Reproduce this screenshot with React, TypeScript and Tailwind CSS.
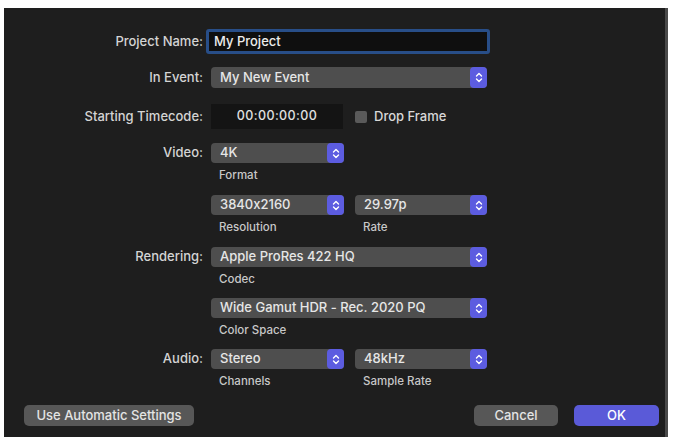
import React from 'react';

const font = { fontFamily: 'Inter, "Noto Sans", "Liberation Sans", sans-serif' };

function Stepper() {
  return (
    <div className="flex h-full w-[17px] items-center justify-center rounded-[4px] bg-[#5c5ce0]">
      <svg width="8" height="11" viewBox="0 0 8 11" fill="none" stroke="#ffffff" strokeWidth="1.4" strokeLinecap="round" strokeLinejoin="round">
        <path d="M1.5 4 L4 1.5 L6.5 4" />
        <path d="M1.5 7 L4 9.5 L6.5 7" />
      </svg>
    </div>
  );
}

function Popup({ value, width }: { value: string; width: string }) {
  return (
    <div className={`flex h-[20px] items-center justify-between rounded-[4px] bg-[#4e4e4e] pl-[9px] ${width}`}>
      <span className="text-[13px] font-medium text-[#e6e6e6]">{value}</span>
      <Stepper />
    </div>
  );
}

function Label({ children }: { children: React.ReactNode }) {
  return <div className="w-[199px] shrink-0 text-right text-[13px] font-medium text-[#d4d4d4]">{children}</div>;
}

function Sub({ children, width = 'w-[133px]' }: { children: React.ReactNode; width?: string }) {
  return <div className={`h-[24px] pl-[8px] text-[11.5px] font-medium leading-[24px] text-[#c8c8c8] ${width}`}>{children}</div>;
}

export default function App() {
  return (
    <div className="h-[437px] w-[676px] overflow-hidden bg-white [font-feature-settings:'calt'_0]" style={font}>
      <div className="ml-[4px] mt-[8px] h-[429px] w-[664px] border-r-[3px] border-[#4a4a4a] bg-[#1e1e1e] pt-[21px]">
        {/* project name */}
        <div className="flex items-center">
          <Label>Project Name:</Label>
          <div className="ml-[3px] flex h-[25px] w-[284px] items-center rounded-[3px] border-[3px] border-[#284e88] bg-[#0f0f0f] pl-[5px]">
            <span className="text-[13px] font-medium text-[#ececec]">My Project</span>
          </div>
        </div>

        <div className="mt-[13px] flex items-center">
          <Label>In Event:</Label>
          <div className="ml-[8px]">
            <Popup value="My New Event" width="w-[276px] h-[21px]" />
          </div>
        </div>

        <div className="mt-[16px] flex items-center">
          <Label>Starting Timecode:</Label>
          <div className="ml-[8px] flex h-[25px] w-[132px] items-center justify-center bg-[#141414]">
            <span className="text-[12.5px] font-medium tracking-[0.4px] text-[#e0e0e0]">00:00:00:00</span>
          </div>
          <div className="ml-[12px] h-[12px] w-[12px] rounded-[2px] bg-[#5a5a5a]" />
          <span className="ml-[7px] text-[13px] font-medium text-[#d8d8d8]">Drop Frame</span>
        </div>

        {/* video */}
        <div className="mt-[14px] flex items-center">
          <Label>Video:</Label>
          <div className="ml-[8px]">
            <Popup value="4K" width="w-[133px]" />
          </div>
        </div>
        <div className="ml-[207px] flex">
          <Sub>Format</Sub>
        </div>
        <div className="ml-[207px] mt-[8px] flex gap-[11px]">
          <Popup value="3840x2160" width="w-[133px]" />
          <Popup value="29.97p" width="w-[132px]" />
        </div>
        <div className="ml-[207px] flex gap-[11px]">
          <Sub>Resolution</Sub>
          <Sub>Rate</Sub>
        </div>

        {/* rendering */}
        <div className="mt-[8px] flex items-center">
          <Label>Rendering:</Label>
          <div className="ml-[8px]">
            <Popup value="Apple ProRes 422 HQ" width="w-[276px]" />
          </div>
        </div>
        <div className="ml-[207px] flex">
          <Sub>Codec</Sub>
        </div>
        <div className="ml-[207px] mt-[7px] flex">
          <Popup value="Wide Gamut HDR - Rec. 2020 PQ" width="w-[276px]" />
        </div>
        <div className="ml-[207px] flex">
          <Sub>Color Space</Sub>
        </div>

        {/* audio */}
        <div className="mt-[7px] flex items-center">
          <Label>Audio:</Label>
          <div className="ml-[8px] flex gap-[11px]">
            <Popup value="Stereo" width="w-[133px]" />
            <Popup value="48kHz" width="w-[132px]" />
          </div>
        </div>
        <div className="ml-[207px] flex gap-[11px]">
          <Sub>Channels</Sub>
          <Sub>Sample Rate</Sub>
        </div>

        {/* buttons */}
        <div className="mt-[12px] flex items-center pl-[20px] pr-[6px]">
          <button className="h-[21px] w-[170px] rounded-[5px] bg-[#575757] text-[13px] font-medium text-[#e4e4e4]">
            Use Automatic Settings
          </button>
          <div className="flex-1" />
          <button className="h-[21px] w-[84px] rounded-[5px] bg-[#575757] text-[13px] font-medium text-[#e4e4e4]">
            Cancel
          </button>
          <button className="ml-[16px] h-[21px] w-[85px] rounded-[5px] bg-[#5a5ad8] text-[13px] font-medium text-white">
            OK
          </button>
        </div>
      </div>
    </div>
  );
}
